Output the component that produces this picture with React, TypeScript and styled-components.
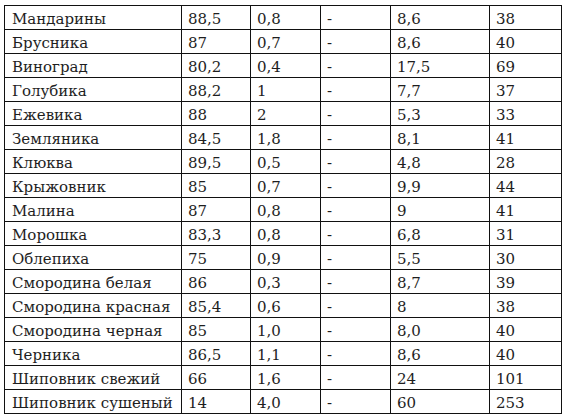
import React from "react";
import styled, { createGlobalStyle } from "styled-components";

const Global = createGlobalStyle`
  html, body { margin: 0; padding: 0; background: #fff; }
  body { font-family: "DejaVu Serif", serif; }
`;

const Page = styled.div`
  padding: 5px 0 0 4px;
`;

const Table = styled.table`
  border-collapse: collapse;
  table-layout: fixed;
  width: 558px;
  font-family: "DejaVu Serif", "Liberation Serif", serif;
  font-size: 15px;
  color: #1e1e1e;
`;

const Col = styled.col<{ $w: number }>`
  width: ${(p) => p.$w}px;
`;

const Row = styled.tr`
  height: 24px;
`;

const Cell = styled.td`
  border: 1px solid #111;
  padding: 3px 4px 0 6px;
  height: 23px;
  box-sizing: border-box;
  white-space: nowrap;
  overflow: hidden;
  line-height: 20px;
  vertical-align: middle;
`;

const NameCell = styled(Cell)`
  padding-left: 7px;
`;

const rows: string[][] = [
  ["Мандарины", "88,5", "0,8", "-", "8,6", "38"],
  ["Брусника", "87", "0,7", "-", "8,6", "40"],
  ["Виноград", "80,2", "0,4", "-", "17,5", "69"],
  ["Голубика", "88,2", "1", "-", "7,7", "37"],
  ["Ежевика", "88", "2", "-", "5,3", "33"],
  ["Земляника", "84,5", "1,8", "-", "8,1", "41"],
  ["Клюква", "89,5", "0,5", "-", "4,8", "28"],
  ["Крыжовник", "85", "0,7", "-", "9,9", "44"],
  ["Малина", "87", "0,8", "-", "9", "41"],
  ["Морошка", "83,3", "0,8", "-", "6,8", "31"],
  ["Облепиха", "75", "0,9", "-", "5,5", "30"],
  ["Смородина белая", "86", "0,3", "-", "8,7", "39"],
  ["Смородина красная", "85,4", "0,6", "-", "8", "38"],
  ["Смородина черная", "85", "1,0", "-", "8,0", "40"],
  ["Черника", "86,5", "1,1", "-", "8,6", "40"],
  ["Шиповник свежий", "66", "1,6", "-", "24", "101"],
  ["Шиповник сушеный", "14", "4,0", "-", "60", "253"],
];

const widths = [177, 69, 70, 70, 99, 72];

export default function App() {
  return (
    <Page>
      <Global />
      <Table>
        <colgroup>
          {widths.map((w, i) => (
            <Col key={i} $w={w} />
          ))}
        </colgroup>
        <tbody>
          {rows.map((r, i) => (
            <Row key={i}>
              <NameCell>{r[0]}</NameCell>
              {r.slice(1).map((c, j) => (
                <Cell key={j}>{c}</Cell>
              ))}
            </Row>
          ))}
        </tbody>
      </Table>
    </Page>
  );
}
